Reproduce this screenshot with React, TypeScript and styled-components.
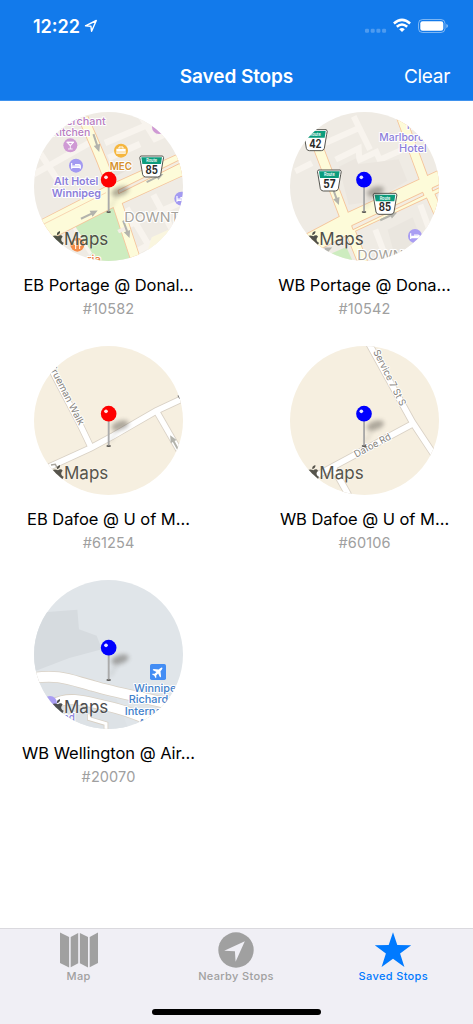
import type { ReactNode } from "react";
import styled, { createGlobalStyle } from "styled-components";

const GlobalStyle = createGlobalStyle`
  * {
    box-sizing: border-box;
  }

  body {
    margin: 0;
    background: #fff;
    font-family: Inter, "Liberation Sans", sans-serif;
  }
`;

const Screen = styled.div`
  display: flex;
  flex-direction: column;
  width: 473px;
  height: 1024px;
  overflow: hidden;
  background: #fff;
`;

const Header = styled.header`
  height: 101px;
  flex-shrink: 0;
  background: #127aeb;
  border-bottom: 1px solid #3f92ee;
  color: #fff;
`;

const StatusBar = styled.div`
  height: 52px;
  display: flex;
  align-items: center;
  justify-content: space-between;
  padding: 0 24px 0 33px;
`;

const StatusGroup = styled.div`
  display: flex;
  align-items: center;
`;

const Time = styled.span`
  font-size: 18px;
  font-weight: 600;
  letter-spacing: 0;
  margin-right: 4px;
`;

const NavBar = styled.div`
  height: 48px;
  display: grid;
  grid-template-columns: 1fr auto 1fr;
  align-items: center;
  padding: 0 23px;
`;

const NavTitle = styled.h1`
  grid-column: 2;
  margin: 0;
  font-size: 19px;
  font-weight: 600;
  letter-spacing: -0.1px;
`;

const NavButton = styled.button`
  justify-self: end;
  border: 0;
  padding: 0;
  background: none;
  color: inherit;
  font: inherit;
  font-size: 19px;
  letter-spacing: -0.3px;
`;

const StopGrid = styled.main`
  flex: 1;
  display: grid;
  grid-template-columns: 181px 181px;
  grid-auto-rows: 234px;
  justify-content: space-between;
  align-content: start;
  padding: 11px 18px 0;
`;

const StopCell = styled.article`
  display: flex;
  flex-direction: column;
  align-items: center;
`;

const Thumbnail = styled.svg`
  display: block;
  width: 149px;
  height: 149px;
  border-radius: 50%;
  font-family: Inter, "Liberation Sans", sans-serif;
`;

const StopName = styled.div`
  margin-top: 13px;
  font-size: 16.5px;
  line-height: 22px;
  letter-spacing: -0.04px;
  color: #000;
  white-space: nowrap;
`;

const StopNumber = styled.div`
  margin-top: 3px;
  font-size: 14.5px;
  line-height: 20px;
  letter-spacing: 0.1px;
  color: #a0a0a0;
`;

const TabBar = styled.nav`
  height: 96px;
  flex-shrink: 0;
  display: grid;
  grid-template-rows: 1fr auto;
  background: #f0eff5;
  border-top: 1px solid #dad9de;
`;

const Tabs = styled.div`
  display: grid;
  grid-template-columns: repeat(3, 1fr);
  padding-right: 1px;
`;

const Tab = styled.div<{ $active?: boolean }>`
  display: flex;
  flex-direction: column;
  align-items: center;
  padding-top: 3px;
  color: ${({ $active }) => ($active ? "#007aff" : "#a0a0a0")};
`;

const TabLabel = styled.span`
  margin-top: 1px;
  font-size: 11px;
  font-weight: 500;
  line-height: 14px;
  letter-spacing: 0.35px;
`;

const HomeIndicator = styled.div`
  width: 169px;
  height: 6px;
  margin: 0 auto 9px;
  border-radius: 3px;
  background: #000;
`;

interface LabelProps {
  x: number;
  y: number;
  width: number;
  size?: number;
  color: string;
  halo?: string;
  weight?: number;
  transform?: string;
  children: string;
}

function MapLabel({
  x,
  y,
  width,
  size = 33,
  color,
  halo = "#fff",
  weight = 500,
  transform,
  children,
}: LabelProps) {
  return (
    <text
      x={x}
      y={y}
      textLength={width}
      lengthAdjust="spacingAndGlyphs"
      fontSize={size}
      fontWeight={weight}
      fill={color}
      stroke={halo}
      strokeWidth={6}
      strokeLinejoin="round"
      paintOrder="stroke"
      transform={transform}
    >
      {children}
    </text>
  );
}

interface RoadProps {
  d: string;
  width: number;
  fill?: string;
  edge?: string;
}

function RoadEdge({ d, width, edge = "#d9d1c5" }: RoadProps) {
  return <path d={d} fill="none" stroke={edge} strokeWidth={width + 5} />;
}

function RoadFill({ d, width, fill = "#fff" }: RoadProps) {
  return <path d={d} fill="none" stroke={fill} strokeWidth={width} />;
}

/** Draws every casing first so that the junctions stay open. */
function Roads({ roads }: { roads: RoadProps[] }) {
  return (
    <>
      {roads.map((r) => (
        <RoadEdge key={r.d} {...r} />
      ))}
      {roads.map((r) => (
        <RoadFill key={r.d} {...r} />
      ))}
    </>
  );
}

function Arrow({ x, y, angle }: { x: number; y: number; angle: number }) {
  return (
    <path
      transform={`translate(${x} ${y}) rotate(${angle})`}
      d="M-28-3H6V-10L28 0 6 10V3H-28Z"
      fill="#b3b3ac"
    />
  );
}

function RouteShield({ x, y, route }: { x: number; y: number; route: string }) {
  return (
    <g transform={`translate(${x} ${y})`}>
      <path
        d="M-33-32H33Q38-29 34-18L27 24Q25 31 18 31H-18Q-25 31-27 24L-34-18Q-38-29-33-32Z"
        fill="#fff"
        stroke="#55554f"
        strokeWidth={3}
      />
      <path d="M-31-28H31L28-8H-28Z" fill="#0c9c7c" />
      <text
        y={-13}
        textAnchor="middle"
        fontSize={13}
        fontWeight={600}
        fill="#fff"
        textLength={32}
        lengthAdjust="spacingAndGlyphs"
      >
        Route
      </text>
      <text
        y={22}
        textAnchor="middle"
        fontSize={34}
        fontWeight={700}
        fill="#2b2b2b"
        textLength={37}
        lengthAdjust="spacingAndGlyphs"
      >
        {route}
      </text>
    </g>
  );
}

function Poi({ x, y, color, children }: {
  x: number;
  y: number;
  color: string;
  children?: ReactNode;
}) {
  return (
    <g transform={`translate(${x} ${y})`}>
      <circle r={21} fill={color} />
      {children}
    </g>
  );
}

const Bed = () => (
  <path
    d="M-13-8V9M-13 5H13V9M-11 1H13V5M-3-3H9Q13-3 13 1"
    fill="none"
    stroke="#fff"
    strokeWidth={3.5}
  />
);

function Pin({ color, soft }: { color: string; soft: string }) {
  return (
    <>
      <ellipse
        cx={270}
        cy={250}
        rx={27}
        ry={13}
        transform="rotate(-18 270 250)"
        fill="#49453e"
        opacity={0.42}
        filter={`url(#${soft})`}
      />
      <path
        d="M240 300L262 262"
        stroke="#49453e"
        strokeWidth={8}
        opacity={0.13}
        filter={`url(#${soft})`}
      />
      <ellipse cx={236} cy={312} rx={7} ry={3} fill="#55534f" />
      <path d="M236 232V311" stroke="#999" strokeWidth={5} />
      <path d="M235 236V308" stroke="#c4c4c4" strokeWidth={1.5} />
      <circle cx={236} cy={215} r={23.5} fill={color} />
      <circle cx={228} cy={208} r={5.5} fill="#fff" opacity={0.9} />
    </>
  );
}

function AppleMaps({ tint }: { tint: string }) {
  return (
    <g fill={tint}>
      <path d="M84 385C77 380 66 382 62 389C56 402 66 419 74 416Q81 412 87 415C94 418 99 410 101 404C92 400 92 391 98 386C94 380 88 382 84 385Z" />
      <path d="M81 382Q79 372 90 369Q92 378 81 382Z" />
      <text
        x={102}
        y={412}
        fontSize={53}
        fontWeight={400}
        textLength={133}
        lengthAdjust="spacingAndGlyphs"
        stroke="#fff"
        strokeOpacity={0.4}
        strokeWidth={4}
        paintOrder="stroke"
      >
        Maps
      </text>
    </g>
  );
}

const YELLOW = { fill: "#fdfbd9", edge: "#f5c49a" };

const PortageDonald = () => (
  <>
    <path d="M0 0H480V480H0Z" fill="#efebe4" />
    <path
      d="M0 205L200 92M14 110L95 235M225 105L460 5M235 150L330 108M330 20L375 92L470 50M290 300L390 470M370 260L440 390M265 365L460 280M320 430L470 350"
      fill="none"
      stroke="#f8f4ee"
      strokeWidth={19}
    />
    <path d="M245 182L300 155L310 178L258 204Z" fill="#e7e2da" />
    <path d="M365 388L460 345V455H345Z" fill="#faf6df" />
    <path d="M128 352L250 298L306 470H200Z" fill="#cdecbf" />
    <path
      d="M128 352L182 438"
      stroke="#f8f4ee"
      strokeWidth={10}
    />
    <Roads
      roads={[
        { d: "M160 30C190 100 215 150 240 225L266 300L322 470", width: 27, ...YELLOW },
        { d: "M0 389L237 268L470 162", width: 63, ...YELLOW },
      ]}
    />
    <path
      d="M264 247L470 145V156L266 257Z"
      fill="#f4ede1"
      stroke="#f3b98b"
      strokeWidth={2.5}
    />
    <path d="M20 359L228 254" stroke="#f5ceaa" strokeWidth={2.5} />
    <path d="M262 366L290 353L296 365L267 376Z" fill="#f4eee7" />
    <Arrow x={199} y={105} angle={72} />
    <Arrow x={178} y={320} angle={-26} />
    <Arrow x={375} y={210} angle={-26} />
    <Arrow x={289} y={364} angle={70} />
    <MapLabel x={79} y={52} width={148} color="#b77dc1">Merchant</MapLabel>
    <MapLabel x={66} y={85} width={115} color="#b77dc1">Kitchen</MapLabel>
    <Poi x={121} y={112} color="#cf99d4">
      <path d="M-11-10H11L0 2ZM0 1V11M-7 11H7" fill="#fff" stroke="#fff" strokeWidth={2.5} />
      <path d="M-5-7H5L0-2Z" fill="#cf99d4" />
    </Poi>
    <Poi x={138} y={173} color="#a39af1">
      <Bed />
    </Poi>
    <Poi x={273} y={128} color="#f5b63e">
      <path d="M-14-6H14V9H-14Z" fill="#fff" />
      <path d="M-6-6V-11H6V-6M-14 5H14" fill="none" stroke="#fff" strokeWidth={3} />
      <path d="M-14 4H14" stroke="#f5b63e" strokeWidth={2} />
    </Poi>
    <Poi x={387} y={57} color="#cf99d4" />
    <Poi x={454} y={272} color="#a39af1">
      <Bed />
    </Poi>
    <Poi x={142} y={410} color="#f58c48">
      <path
        d="M-9-12V-3Q-9 1-5 1Q-1 1-1-3V-12M-5-12V13M7 13V-12Q14-4 11 2H7"
        fill="none"
        stroke="#fff"
        strokeWidth={3}
      />
    </Poi>
    <MapLabel x={239} y={185} width={67} size={31} weight={600} color="#d5912c">MEC</MapLabel>
    <MapLabel x={72} y={232} width={133} weight={600} color="#8c80da">Alt Hotel</MapLabel>
    <MapLabel x={65} y={267} width={148} weight={600} color="#8c80da">Winnipeg</MapLabel>
    <MapLabel x={283} y={343} width={272} size={39} weight={400} color="#a5a29b">
      DOWNTOWN
    </MapLabel>
    <MapLabel x={171} y={466} width={42} color="#e98244">ria</MapLabel>
    <RouteShield x={365} y={176} route="85" />
  </>
);

const PortageMarlborough = () => (
  <>
    <path d="M0 0H480V480H0Z" fill="#efebe4" />
    <path
      d="M30 190L80 165M120 105L216 62M205 25L254 125M151 155L220 121L222 156L273 132L283 155L385 110M375 100L410 215M240 0L470 30M405 290L470 470M270 365L310 470"
      fill="none"
      stroke="#f8f4ee"
      strokeWidth={18}
    />
    <path d="M161 176L212 151L219 169L340 154L366 218L300 259L230 285L190 290Z" fill="#ebe6df" />
    <path d="M307 365L382 328L430 455L330 450Z" fill="#eae6df" />
    <path d="M109 449L183 417L207 470H100Z" fill="#cdecbf" />
    <Roads
      roads={[
        { d: "M84 80L185 345L235 470", width: 27, ...YELLOW },
        { d: "M337 0L425 238L470 340", width: 25, ...YELLOW },
        { d: "M0 445L180 350L470 215", width: 58, ...YELLOW },
      ]}
    />
    <path
      d="M199 353L412 253L416 262L203 365Z"
      fill="#f4ede1"
      stroke="#f3b98b"
      strokeWidth={2.5}
    />
    <path
      d="M440 240L470 226V235L442 249Z"
      fill="#f4ede1"
      stroke="#f3b98b"
      strokeWidth={2.5}
    />
    <Arrow x={151} y={265} angle={70} />
    <Arrow x={310} y={325} angle={-25} />
    <Arrow x={115} y={430} angle={-25} />
    <MapLabel x={359} y={63} width={55} color="#8c80da">The</MapLabel>
    <MapLabel x={282} y={98} width={191} color="#8c80da">Marlborough</MapLabel>
    <MapLabel x={341} y={132} width={83} color="#8c80da">Hotel</MapLabel>
    <Poi x={389} y={384} color="#a99df3">
      <Bed />
    </Poi>
    <MapLabel x={216} y={456} width={272} size={39} weight={400} color="#a5a29b">
      DOWNTOWN
    </MapLabel>
    <RouteShield x={90} y={97} route="42" />
    <RouteShield x={132} y={218} route="57" />
    <RouteShield x={299} y={288} route="85" />
  </>
);

const DafoeEast = () => (
  <>
    <path d="M0 0H480V480H0Z" fill="#f6efe0" />
    <Roads
      roads={[
        { d: "M20 20L70 94L151 249L184 318", width: 16 },
        { d: "M378 205L450 330", width: 16 },
        { d: "M0 404L60 374L182 318L250 281L378 207L470 164", width: 17 },
      ]}
    />
    <Arrow x={434} y={304} angle={-119} />
    <MapLabel
      x={0}
      y={0}
      width={202}
      size={29}
      weight={400}
      color="#85827c"
      transform="translate(55 72) rotate(63)"
    >
      Trueman Walk
    </MapLabel>
    <path d="M63 369L76 367L81 377" fill="none" stroke="#aaa69e" strokeWidth={4} />
    <path d="M444 160L450 170" stroke="#777" strokeWidth={4} />
  </>
);

const DafoeWest = () => (
  <>
    <path d="M0 0H480V480H0Z" fill="#f6efe0" />
    <Roads
      roads={[
        { d: "M248 0L381 240L455 352", width: 17 },
        { d: "M80 408L148 371L381 246", width: 17 },
        { d: "M142 374L190 460", width: 17 },
      ]}
    />
    <MapLabel
      x={0}
      y={0}
      width={184}
      size={29}
      weight={400}
      color="#85827c"
      transform="translate(263 29) rotate(63.5)"
    >
      Service 7 St S
    </MapLabel>
    <MapLabel
      x={0}
      y={0}
      width={120}
      size={29}
      weight={400}
      color="#85827c"
      transform="translate(213 347) rotate(-28)"
    >
      Dafoe Rd
    </MapLabel>
  </>
);

const Airport = () => (
  <>
    <path d="M0 0H480V480H0Z" fill="#e0e5e9" />
    <path d="M0 112L142 101L147 160L200 179L216 220L118 246L0 291Z" fill="#d6dbdf" />
    <path d="M0 315Q60 310 120 325L260 370L300 470H0Z" fill="#dde2e6" />
    <Roads
      roads={[
        { d: "M0 307C90 293 120 312 190 330C270 354 350 365 470 397", width: 30 },
        { d: "M70 385C120 355 180 380 235 391C290 402 340 425 400 450", width: 28 },
        { d: "M178 415V428L228 443V470", width: 9 },
      ]}
    />
    <Poi x={60} y={381} color="#a99df3" />
    <MapLabel x={48} y={434} width={87} size={31} color="#8c80da">Grand</MapLabel>
    <rect x={360} y={264} width={48} height={48} rx={5} fill="#438df4" />
    <path
      transform="translate(384 288) rotate(45)"
      d="M0-18C3-18 3.500-12 3.500-7L16 3V7L3.500 3V11L8 15V18L0 15.500L-8 18V15L-3.500 11V3L-16 7V3L-3.500-7C-3.500-12-3-18 0-18Z"
      fill="#fff"
    />
    <MapLabel x={312} y={348} width={147} color="#4281cb">Winnipeg</MapLabel>
    <MapLabel x={296} y={382} width={176} color="#4281cb">Richardson</MapLabel>
    <MapLabel x={284} y={416} width={198} color="#4281cb">International</MapLabel>
    <MapLabel x={325} y={453} width={110} color="#4281cb">Airport</MapLabel>
  </>
);

const stops = [
  { name: "EB Portage @ Donal…", number: "10582", pin: "#fe0000", tint: "#4d5145", left: 12, map: <PortageDonald /> },
  { name: "WB Portage @ Dona…", number: "10542", pin: "#0000fe", tint: "#50504b", left: 14, map: <PortageMarlborough /> },
  { name: "EB Dafoe @ U of M…", number: "61254", pin: "#fe0000", tint: "#56544c", left: 12, map: <DafoeEast /> },
  { name: "WB Dafoe @ U of M…", number: "60106", pin: "#0000fe", tint: "#56544c", left: 14, map: <DafoeWest /> },
  { name: "WB Wellington @ Air…", number: "20070", pin: "#0000fe", tint: "#4d4e50", left: 12, map: <Airport /> },
];

const LocationIcon = () => (
  <svg width="14" height="14" viewBox="0 0 14 14" fill="none">
    <path
      d="M1.500 6.800L12.300 1.500L7.600 12.300L6.900 7.200Z"
      stroke="#fff"
      strokeWidth="1.400"
      strokeLinejoin="round"
    />
  </svg>
);

const StatusIcons = () => (
  <svg width="86" height="18" viewBox="0 0 86 18" fill="none">
    <g fill="#fff" opacity="0.25">
      <rect x="2" y="11.800" width="4" height="4" rx="1.200" />
      <rect x="7.700" y="11.800" width="4" height="4" rx="1.200" />
      <rect x="13.400" y="11.800" width="4" height="4" rx="1.200" />
      <rect x="19.100" y="11.800" width="4" height="4" rx="1.200" />
    </g>
    <g stroke="#fff" strokeWidth="2.500">
      <path d="M30.900 6.500Q39 -0.700 47.100 6.500" />
      <path d="M33.800 9.800Q39 5.300 44.200 9.800" />
    </g>
    <path d="M36.200 12.200Q39 9.900 41.800 12.200L39 15.100Z" fill="#fff" />
    <rect x="55.500" y="2.500" width="26.500" height="13" rx="4" stroke="#fff" strokeOpacity="0.45" />
    <rect x="57.300" y="4.300" width="23" height="9.500" rx="2.300" fill="#fff" />
    <path d="M83.300 7Q85 7.700 85 9T83.300 11Z" fill="#fff" fillOpacity="0.5" />
  </svg>
);

const MapIcon = () => (
  <svg width="40" height="36" viewBox="0 0 40 36" fill="currentColor">
    <path d="M1 .6L10.100 5V35.500L1 31Z" />
    <path d="M11.700 5L19.200 1V31.200L11.700 35.300Z" />
    <path d="M20.900 1L29 5V35.500L20.900 31.200Z" />
    <path d="M30.700 5L39 .6V31L30.700 35.300Z" />
  </svg>
);

const NearbyIcon = () => (
  <svg width="36" height="36" viewBox="0 0 36 36">
    <circle cx="18" cy="18" r="17.700" fill="currentColor" />
    <path d="M26.800 9.300L6.200 18.700L16.900 19.300L17.600 29.700Z" fill="#f0eff5" />
  </svg>
);

const StarIcon = () => (
  <svg width="38" height="36" viewBox="0 0 38 36" fill="currentColor">
    <path d="M19 .2L23.300 13.100L37.200 13.200L26.100 21.500L30.400 34.900L19 26.800L7.600 34.900L11.900 21.500L.8 13.200L14.700 13.100Z" />
  </svg>
);

export default function App() {
  return (
    <>
      <GlobalStyle />
      <Screen>
        <Header>
          <StatusBar>
            <StatusGroup>
              <Time>12:22</Time>
              <LocationIcon />
            </StatusGroup>
            <StatusIcons />
          </StatusBar>
          <NavBar>
            <NavTitle>Saved Stops</NavTitle>
            <NavButton type="button">Clear</NavButton>
          </NavBar>
        </Header>
        <StopGrid>
          {stops.map((stop) => (
            <StopCell key={stop.number}>
              <Thumbnail viewBox={`${stop.left} 12 447 447`}>
                <defs>
                  <filter id={`soft-${stop.number}`} x="-50%" y="-80%" width="200%" height="260%">
                    <feGaussianBlur stdDeviation="7" />
                  </filter>
                </defs>
                {stop.map}
                <AppleMaps tint={stop.tint} />
                <Pin color={stop.pin} soft={`soft-${stop.number}`} />
              </Thumbnail>
              <StopName>{stop.name}</StopName>
              <StopNumber>#{stop.number}</StopNumber>
            </StopCell>
          ))}
        </StopGrid>
        <TabBar>
          <Tabs>
            <Tab>
              <MapIcon />
              <TabLabel>Map</TabLabel>
            </Tab>
            <Tab>
              <NearbyIcon />
              <TabLabel>Nearby Stops</TabLabel>
            </Tab>
            <Tab $active>
              <StarIcon />
              <TabLabel>Saved Stops</TabLabel>
            </Tab>
          </Tabs>
          <HomeIndicator />
        </TabBar>
      </Screen>
    </>
  );
}
